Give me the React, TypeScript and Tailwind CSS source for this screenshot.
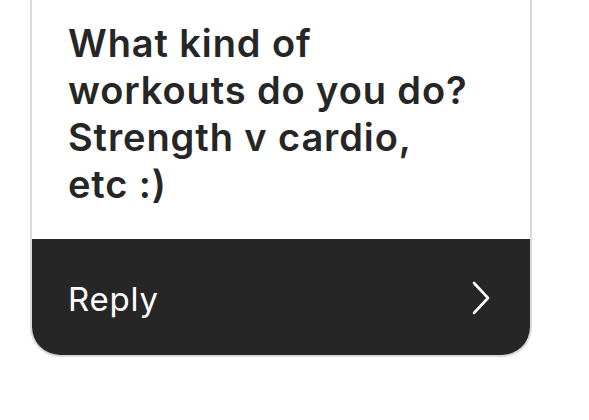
import React from 'react';

export default function App() {
  return (
    <div className="w-[589px] h-[420px] bg-white overflow-hidden" style={{ fontFamily: 'Inter, "Noto Sans", sans-serif' }}>
      <div className="pl-[30px]">
        <div className="w-[502px] border-2 border-t-0 border-[#dadada] rounded-b-[30px] overflow-hidden">
          <div className="bg-white pl-[36px] pt-[20px] pb-[31px]">
            <p className="text-[38px] leading-[47px] font-semibold text-[#262626] tracking-[0.9px]">
              What kind of
              <br />
              workouts do you do?
              <br />
              Strength v cardio,
              <br />
              etc :)
            </p>
          </div>
          <div className="bg-[#262626] h-[116px] flex items-center justify-between pl-[36px] pr-[39px]">
            <span className="text-white text-[33px] leading-none pt-[4px] tracking-[0.8px]">Reply</span>
            <svg width="20" height="34" viewBox="0 0 20 34" fill="none" className="mt-[2px]">
              <path d="M3 2 L17 17 L3 32" stroke="white" strokeWidth="2.6" strokeLinecap="round" strokeLinejoin="round" />
            </svg>
          </div>
        </div>
      </div>
    </div>
  );
}
